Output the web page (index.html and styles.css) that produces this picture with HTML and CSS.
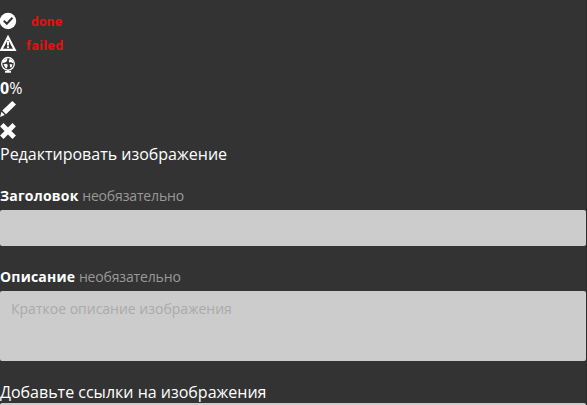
FILE: index.html
```
<!DOCTYPE html>
<html lang="ru">
<head>
<meta charset="utf-8">
<title>Редактировать изображение</title>
<link rel="stylesheet" href="styles.css">
</head>
<body>
<main class="panel">
  <div class="row"><svg class="icon" viewBox="0 0 16 16"><circle cx="8" cy="8" r="8.2" fill="#fff"/><path d="M3.8 7.8 6.8 10.8 12.4 4.8" fill="none" stroke="#333" stroke-width="2"/></svg><span class="status done">done</span></div>
  <div class="row"><svg class="icon" viewBox="0 0 16 16"><path d="M8 2 14.7 14.8H1.3Z" fill="none" stroke="#fff" stroke-width="2.2"/><path d="M7 6h2v4.5H7zM7 11.3h2v2H7z" fill="#fff"/></svg><span class="status failed">failed</span></div>
  <div class="row"><svg class="icon" viewBox="0 0 16 16"><circle cx="8" cy="6.8" r="6.3" fill="#333" stroke="#fff" stroke-width="1.3"/><path d="M2 5 3.2 3 5 2.5 7.3 1.3 7.2 3.5 6 5 3.5 6ZM3.5 7.2 6.5 6.8 7.8 8 6.8 11.5 5.2 10.5ZM8.8 2.8 10.5 2 12.7 3.5 13.8 5.8 12 6 11.2 5 9 5.5ZM9.8 7 12.5 7.5 11.5 10.5 10 10.2ZM7 13h2v1h2v1.7H5V14h2Z" fill="#fff"/></svg></div>
  <div class="row percent"><b>0</b>%</div>
  <div class="row"><svg class="icon" viewBox="0 0 16 16"><path d="M12.3 0 16 3.6 6 13.2 2.3 9.4ZM1.5 10.7 4.8 14 0 16Z" fill="#fff"/></svg></div>
  <div class="row"><svg class="icon" viewBox="0 0 16 16"><path d="M1.8 1.8 14.2 14.2M14.2 1.8 1.8 14.2" fill="none" stroke="#fff" stroke-width="4.8"/></svg></div>
  <h1 class="title">Редактировать изображение</h1>
  <label class="label"><b>Заголовок</b> <span class="optional">необязательно</span></label>
  <div class="field"></div>
  <label class="label second"><b>Описание</b> <span class="optional">необязательно</span></label>
  <div class="field area">Краткое описание изображения</div>
  <h2 class="title links">Добавьте ссылки на изображения</h2>
  <div class="field"></div>
</main>
</body>
</html>
```
FILE: styles.css
```
* { box-sizing: border-box; }
body {
  margin: 0;
  height: 405px;
  overflow: hidden;
  background: #333;
  color: #fff;
  font: 16px/22px "Open Sans", sans-serif;
}
.panel {
  height: 405px;
  padding-top: 10px;
  border-right: 1px solid #2b2b2b;
  overflow: hidden;
}
.row { display: flex; align-items: center; height: 22px; }
.row:first-child { height: 23px; }
.icon { display: block; width: 16px; height: 16px; flex: none; margin-top: -2px; overflow: visible; }
.status {
  color: #e81010;
  font: bold 13.5px/22px Roboto, sans-serif;
  letter-spacing: 0.3px;
}
.done { margin: -2px 0 0 15px; }
.failed { margin: 1px 0 0 10px; letter-spacing: 0.6px; }
.title { margin: 0; height: 22px; font-size: 16px; font-weight: 400; line-height: 22px; }
.percent b { letter-spacing: 0.2px; }
.label { display: block; height: 20px; margin: 21px 0 4px; font-size: 14px; line-height: 20px; }
.label b { font-weight: 700; letter-spacing: 0.2px; }
.optional { color: #999; letter-spacing: -0.15px; }
.field {
  height: 36px;
  border-radius: 2px;
  background: #ccc;
}
.area { height: 70px; padding: 8px 11px; color: #aaa; font-size: 14px; line-height: 20px; }
.links { margin-top: 20px; }
```
